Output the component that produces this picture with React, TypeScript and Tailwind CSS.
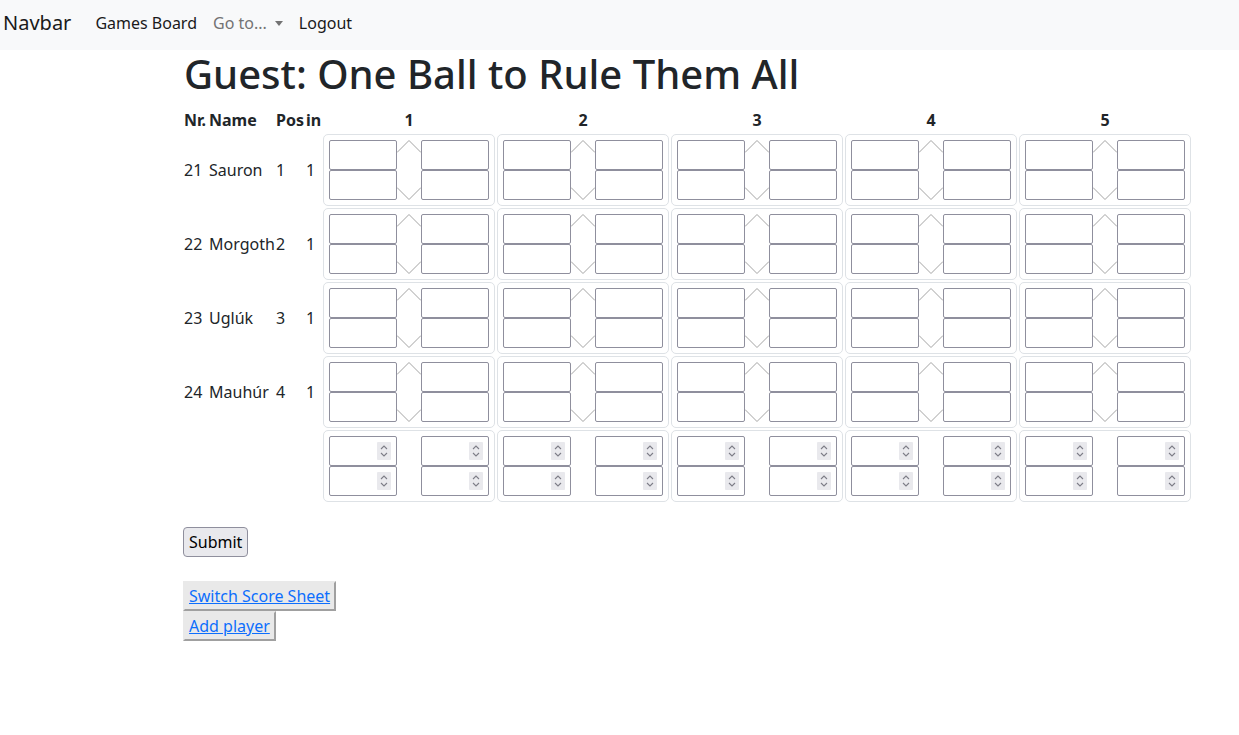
import React from "react";

type Player = { nr: number; name: string; pos: number; inn: number };

const players: Player[] = [
  { nr: 21, name: "Sauron", pos: 1, inn: 1 },
  { nr: 22, name: "Morgoth", pos: 2, inn: 1 },
  { nr: 23, name: "Uglúk", pos: 3, inn: 1 },
  { nr: 24, name: "Mauhúr", pos: 4, inn: 1 },
];

const frames = [1, 2, 3, 4, 5];

function Field() {
  return <div className="h-[30px] w-[68px] rounded-[2px] border border-[#8f8f9d] bg-white" />;
}

function NumberField() {
  return (
    <div className="flex h-[30px] w-[68px] items-center justify-end rounded-[2px] border border-[#8f8f9d] bg-white pr-[5px]">
      <svg className="block shrink-0" width="14" height="18" viewBox="0 0 14 18" aria-hidden>
        <rect width="14" height="18" rx="1" fill="#e9e9ed" />
        <polyline points="4,7 7,4 10,7" fill="none" stroke="#7d7d87" strokeWidth="1.1" />
        <polyline points="4,11 7,14 10,11" fill="none" stroke="#7d7d87" strokeWidth="1.1" />
      </svg>
    </div>
  );
}

function Hex() {
  return (
    <svg className="shrink-0" width="24" height="60" viewBox="0 0 24 60" aria-hidden>
      <polyline points="0,12.5 12,0.5 24,12.5" fill="none" stroke="#a3a3a3" strokeWidth="1" />
      <polyline points="0,47.5 12,59.5 24,47.5" fill="none" stroke="#a3a3a3" strokeWidth="1" />
    </svg>
  );
}

function FrameBox({ totals }: { totals?: boolean }) {
  const F = totals ? NumberField : Field;
  return (
    <div className="flex h-[72px] w-[172px] rounded-[5px] border border-[#dee2e6] p-[5px]">
      <div className="flex flex-col">
        <F />
        <F />
      </div>
      {totals ? <div className="w-[24px] shrink-0" /> : <Hex />}
      <div className="flex flex-col">
        <F />
        <F />
      </div>
    </div>
  );
}

function ScoreGrid() {
  return (
    <div className="grid grid-cols-[25px_67px_30px_17px_repeat(5,174px)] gap-y-[2px] pt-[2px]">
      <div className="h-[24px] font-bold">Nr.</div>
      <div className="font-bold">Name</div>
      <div className="font-bold">Pos</div>
      <div className="font-bold">in</div>
      {frames.map((f) => (
        <div key={f} className="w-[172px] text-center font-bold">
          {f}
        </div>
      ))}

      {players.map((p) => (
        <React.Fragment key={p.nr}>
          <div className="flex items-center">{p.nr}</div>
          <div className="flex items-center whitespace-nowrap">{p.name}</div>
          <div className="flex items-center">{p.pos}</div>
          <div className="flex items-center">{p.inn}</div>
          {frames.map((f) => (
            <FrameBox key={f} />
          ))}
        </React.Fragment>
      ))}

      <div />
      <div />
      <div />
      <div />
      {frames.map((f) => (
        <FrameBox key={f} totals />
      ))}
    </div>
  );
}

export default function App() {
  return (
    <div className="min-h-[735px] bg-white font-['Noto_Sans',sans-serif] text-[16px] leading-[24px] text-[#212529]">
      <nav className="flex h-[50px] items-start bg-[#f8f9fa]">
        <span className="ml-[3px] mt-[8px] mr-[24px] text-[20px] leading-[30px] text-[#1a1a1a]">Navbar</span>
        <div className="mt-[11px] flex items-center gap-[16px]">
          <span className="text-[#1a1a1a]">Games Board</span>
          <span className="flex items-center text-[#737373]">
            Go to...
            <span className="ml-[8px] h-0 w-0 border-x-[4px] border-t-[5px] border-x-transparent border-t-[#737373]" />
          </span>
          <span className="text-[#1a1a1a]">Logout</span>
        </div>
      </nav>

      <main className="ml-[184px]">
        <h1 className="mb-[8px] text-[40px] leading-[48px] font-medium">Guest: One Ball to Rule Them All</h1>
        <ScoreGrid />

        <button className="-ml-[1px] mt-[25px] rounded-[4px] border border-[#8f8f9d] bg-[#e9e9ed] px-[5px] py-[2px] text-black">
          Submit
        </button>

        <div className="-ml-[1px] mt-[24px] flex flex-col items-start">
          <span className="border-2 border-[#e9e9e9] border-r-[#a0a0a0] border-b-[#a0a0a0] bg-[#e9e9e9] px-[4px] py-[1px] text-[#0d6efd] underline">
            Switch Score Sheet
          </span>
          <span className="border-2 border-[#e9e9e9] border-r-[#a0a0a0] border-b-[#a0a0a0] bg-[#e9e9e9] px-[4px] py-[1px] text-[#0d6efd] underline">
            Add player
          </span>
        </div>
      </main>
    </div>
  );
}
